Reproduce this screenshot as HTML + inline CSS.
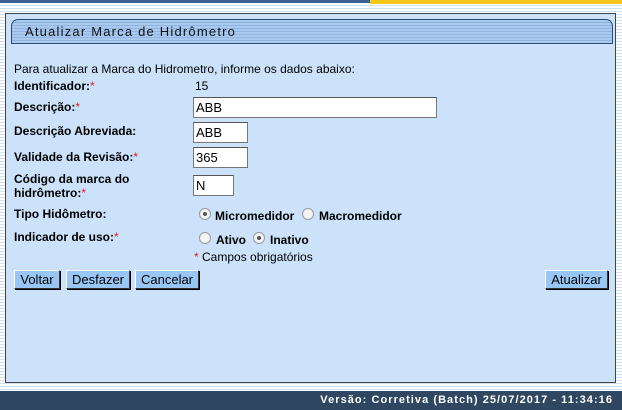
<!DOCTYPE html>
<html><head><meta charset="utf-8"><style>
*{margin:0;padding:0;box-sizing:border-box}
body{width:622px;height:410px;position:relative;overflow:hidden;font-family:"Liberation Sans",Arial,sans-serif;font-size:12px;color:#000;
background:repeating-linear-gradient(#fff 0,#fff 2px,#cfe0f0 2px,#cfe0f0 3px)}
.a{position:absolute;white-space:nowrap}
.req{color:#d22;font-weight:normal}
#top1{left:0;top:0;width:370px;height:3px;background:#3d5f8f}
#top2{left:370px;top:0;width:252px;height:4px;background:#f5c518}
#panel{left:5px;top:13px;width:611px;height:370px;background:#cbe2fa;border:1px solid #444}
#hdr{left:11px;top:19px;width:602px;height:25px;border:1px solid #2b4a7a;border-radius:7px 7px 0 0;
background:repeating-linear-gradient(#a9c9ee 0,#a9c9ee 2px,#8fb4e2 2px,#8fb4e2 3px);}
#hdr span{position:absolute;left:13px;top:4px;font-size:13px;letter-spacing:1.2px;color:#111}
.in{position:absolute;background:#fff;border:1px solid #777;border-top-color:#555;font-size:13px;padding:2px 0 0 2px;height:21px}
.b{font-weight:bold}
.btn{position:absolute;top:270px;height:19px;background:#99c7f5;border:1px solid #333;border-top-color:#fff;border-left-color:#fff;font-size:13px;text-align:center;line-height:17px;box-shadow:1px 1px 0 #000}
.r{position:absolute;width:12px;height:12px;border-radius:50%;border:1px solid #999;background:#f4f4f4}
.r.on::after{content:"";position:absolute;left:3px;top:3px;width:4px;height:4px;border-radius:50%;background:#555}
#foot{left:0;top:391px;width:622px;height:19px;background:#2f4760}
#foot span{position:absolute;right:9px;top:3px;color:#fff;font-weight:bold;font-size:11px;letter-spacing:1.05px}
</style></head><body>
<div class="a" id="top1"></div><div class="a" id="top2"></div>
<div class="a" id="panel"></div>
<div class="a" id="hdr"><span>Atualizar Marca de Hidrômetro</span></div>
<div class="a" style="left:14px;top:62px">Para atualizar a Marca do Hidrometro, informe os dados abaixo:</div>
<div class="a b" style="left:14px;top:79px">Identificador:<span class="req">*</span></div>
<div class="a" style="left:195px;top:79px">15</div>
<div class="a b" style="left:14px;top:100px">Descrição:<span class="req">*</span></div>
<div class="in" style="left:193px;top:97px;width:244px">ABB</div>
<div class="a b" style="left:14px;top:124px">Descrição Abreviada:</div>
<div class="in" style="left:193px;top:122px;width:55px">ABB</div>
<div class="a b" style="left:14px;top:150px">Validade da Revisão:<span class="req">*</span></div>
<div class="in" style="left:193px;top:147px;width:55px">365</div>
<div class="a b" style="left:14px;top:172px;line-height:14px">Código da marca do<br>hidrômetro:<span class="req">*</span></div>
<div class="in" style="left:193px;top:175px;width:41px">N</div>
<div class="a b" style="left:14px;top:207px">Tipo Hidômetro:</div>
<div class="r on" style="left:199px;top:208px"></div>
<div class="a b" style="left:215px;top:209px">Micromedidor</div>
<div class="r" style="left:302px;top:208px"></div>
<div class="a b" style="left:319px;top:209px">Macromedidor</div>
<div class="a b" style="left:14px;top:230px">Indicador de uso:<span class="req">*</span></div>
<div class="r" style="left:199px;top:232px"></div>
<div class="a b" style="left:216px;top:233px">Ativo</div>
<div class="r on" style="left:253px;top:232px"></div>
<div class="a b" style="left:270px;top:233px">Inativo</div>
<div class="a" style="left:194px;top:250px"><span class="req">*</span> Campos obrigatórios</div>
<div class="btn" style="left:14px;width:46px">Voltar</div>
<div class="btn" style="left:66px;width:64px">Desfazer</div>
<div class="btn" style="left:135px;width:64px">Cancelar</div>
<div class="btn" style="left:545px;width:63px">Atualizar</div>
<div class="a" id="foot"><span>Versão: Corretiva (Batch) 25/07/2017 - 11:34:16</span></div>
</body></html>
